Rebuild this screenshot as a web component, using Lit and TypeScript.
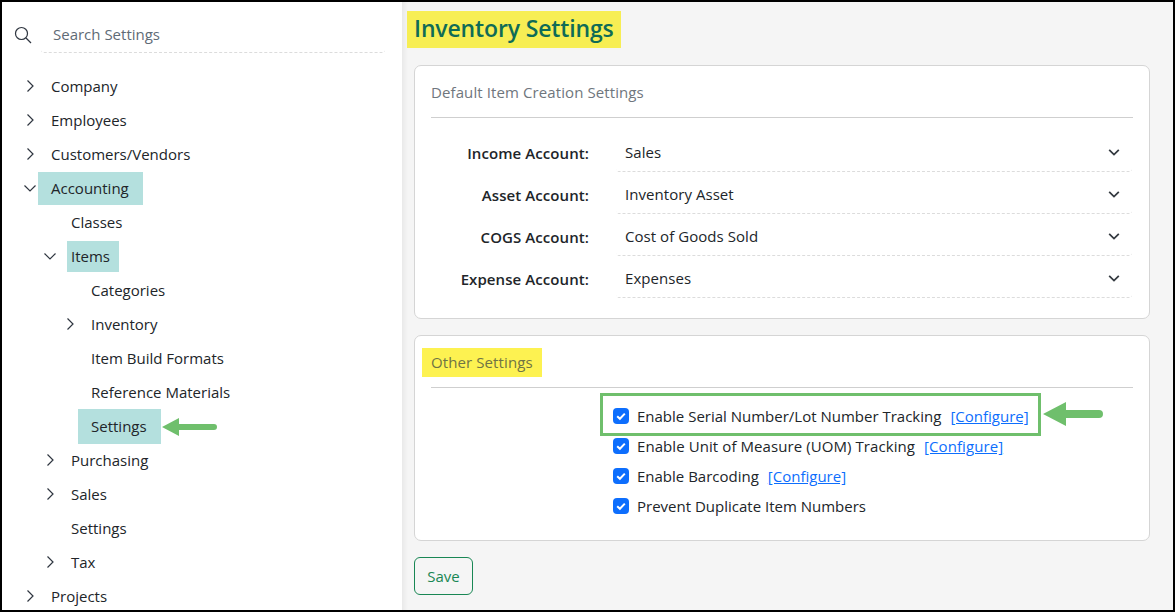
import { LitElement, html, css, svg } from "lit";
import { customElement } from "lit/decorators.js";

type Node = { label: string; level: number; arrow?: "r" | "d"; hl?: string };

const TREE: Node[] = [
  { label: "Company", level: 0, arrow: "r" },
  { label: "Employees", level: 0, arrow: "r" },
  { label: "Customers/Vendors", level: 0, arrow: "r" },
  { label: "Accounting", level: 0, arrow: "d", hl: "hl-a" },
  { label: "Classes", level: 1 },
  { label: "Items", level: 1, arrow: "d", hl: "hl-b" },
  { label: "Categories", level: 2 },
  { label: "Inventory", level: 2, arrow: "r" },
  { label: "Item Build Formats", level: 2 },
  { label: "Reference Materials", level: 2 },
  { label: "Settings", level: 2, hl: "hl-c" },
  { label: "Purchasing", level: 1, arrow: "r" },
  { label: "Sales", level: 1, arrow: "r" },
  { label: "Settings", level: 1 },
  { label: "Tax", level: 1, arrow: "r" },
  { label: "Projects", level: 0, arrow: "r" },
];

const ACCOUNTS = [
  ["Income Account:", "Sales"],
  ["Asset Account:", "Inventory Asset"],
  ["COGS Account:", "Cost of Goods Sold"],
  ["Expense Account:", "Expenses"],
];

const CHECKS: [string, boolean][] = [
  ["Enable Serial Number/Lot Number Tracking", true],
  ["Enable Unit of Measure (UOM) Tracking", true],
  ["Enable Barcoding", true],
  ["Prevent Duplicate Item Numbers", false],
];

const chevronRight = svg`<path d="M5.5 2.5 L11 8 L5.5 13.5" fill="none" stroke="#2f3640" stroke-width="1.2"/>`;
const chevronDown = svg`<path d="M2.5 5.5 L8 11 L13.5 5.5" fill="none" stroke="#2f3640" stroke-width="1.2"/>`;

@customElement("app-root")
export class AppRoot extends LitElement {
  static styles = css`
    :host {
      display: block;
      width: 1175px;
      height: 612px;
      box-sizing: border-box;
      border: 2px solid #000;
      font-family: "Open Sans", "Noto Sans", sans-serif;
      font-size: 15px;
      color: #212529;
      overflow: hidden;
      position: relative;
      background: #fff;
    }
    .layout { display: grid; grid-template-columns: 400px 1fr; height: 100%; }
    .side { background: #fff; overflow: hidden; min-width: 0; }
    .search { display: flex; align-items: flex-start; padding: 10px 0 0 12px; height: 58px; box-sizing: border-box; }
    .search svg { width: 18px; height: 18px; margin-top: 14px; flex: none; }
    .search-box {
      margin-left: 9px; width: 344px; height: 41px; box-sizing: border-box;
      padding: 12px 0 0 12px; border-bottom: 1px dashed #dcdcdc; border-radius: 0 0 3px 3px;
      color: #5f6b76;
    }
    .tree { display: flex; flex-direction: column; margin-top: 9px; }
    .row { height: 34px; display: flex; align-items: center; position: relative; flex: none; }
    .l0 { padding-left: 49px; }
    .l1 { padding-left: 69px; }
    .l2 { padding-left: 89px; }
    .chev { position: absolute; top: 9px; width: 16px; height: 16px; }
    .l0 .chev { left: 20px; }
    .l1 .chev { left: 40px; }
    .l2 .chev { left: 60px; }
    .label { white-space: nowrap; }
    .hl-a, .hl-b, .hl-c { background: #b4e0de; display: flex; align-items: center; }
    .hl-a { margin-left: -13px; padding: 0 14px 0 13px; height: 33px; }
    .hl-b { margin-left: -4px; padding: 0 9px 0 4px; height: 31px; }
    .hl-c { margin-left: -13px; padding: 0 14px 0 13px; height: 35px; }
    .side-arrow { position: absolute; left: 159px; top: 416px; line-height: 0; }
    .main {
      background: linear-gradient(to right, #e9e9e9, #f5f5f5 6px);
      padding: 9px 23px 0 5px;
      min-width: 0; overflow: hidden;
    }
    h1 {
      display: inline-block; margin: 0; padding: 0 7px; height: 37px; line-height: 34px;
      background: #f7ee54; color: #0f6b57; font-size: 23px; font-weight: 600; letter-spacing: -0.14px;
      vertical-align: top;
    }
    .card {
      margin-left: 7px; background: #fff; border: 1px solid #d5d5d5; border-radius: 7px;
      box-sizing: border-box; padding: 0 16px;
    }
    .card.one { margin-top: 17px; height: 254px; }
    .card.two { margin-top: 16px; height: 206px; position: relative; }
    .head { height: 52px; border-bottom: 1px solid #cfcfcf; display: flex; align-items: center; color: #6f767d; letter-spacing: 0.1px; box-sizing: border-box; }
    .two .head { padding: 0 0 1px; }
    .other { background: #fdf251; margin-left: -9px; padding: 0 9px; height: 29px; display: flex; align-items: center; margin-top: 2px; color: #6f7445; }
    .form { display: flex; flex-direction: column; padding-top: 12px; }
    .frow { height: 42px; display: grid; grid-template-columns: 158px 516px; column-gap: 27px; flex: none; }
    .flabel { text-align: right; font-weight: 600; align-self: center; padding-top: 4px; letter-spacing: 0.08px; white-space: nowrap; }
    .select {
      border-bottom: 1px dashed #dcdcdc; border-radius: 0 0 3px 3px; display: flex; align-items: center;
      justify-content: space-between; padding: 2px 11px 0 9px; box-sizing: border-box; letter-spacing: 0.05px;
    }
    .select svg { width: 14px; height: 14px; }
    .checks { display: flex; flex-direction: column; padding: 13px 0 0 182px; }
    .check { height: 30px; display: flex; align-items: center; flex: none; white-space: nowrap; }
    .check:nth-child(2) { letter-spacing: 0.08px; }
    .box { width: 16px; height: 16px; border-radius: 4px; background: #0d6efd; margin-right: 8px; flex: none; display: flex; align-items: center; justify-content: center; }
    .box svg { width: 12px; height: 12px; }
    a { color: #0d6efd; text-decoration: underline; margin-left: 9px; }
    .callout { position: absolute; left: 185px; top: 57px; width: 441px; height: 43px; border: 3px solid #6fbf6c; box-sizing: border-box; pointer-events: none; }
    .main-arrow { position: absolute; left: 1040px; top: 400px; line-height: 0; }
    .save {
      display: block; margin: 16px 0 0 7px; width: 59px; height: 38px; box-sizing: border-box;
      border: 1px solid #198754; border-radius: 6px; background: transparent; color: #198754;
      font: inherit; padding: 0;
    }
  `;

  /** Left-pointing annotation arrow with a rounded tail. */
  private arrow(w: number, h: number, head: number, shaft: number) {
    const mid = h / 2;
    const r = shaft / 2;
    const d = `M1 ${mid} L${head + 1} 0 V${mid - r} H${w - r} a${r} ${r} 0 0 1 0 ${shaft} H${head + 1} V${h} Z`;
    return html`<svg width=${w} height=${h} viewBox="0 0 ${w} ${h}"><path d=${d} fill="#6fbf6c" /></svg>`;
  }

  render() {
    return html`
      <div class="layout">
        <aside class="side">
          <div class="search">
            <svg viewBox="0 0 18 18"><circle cx="7.5" cy="7.5" r="6" fill="none" stroke="#2f3640" stroke-width="1.2"/><path d="M12 12 L17 17" stroke="#2f3640" stroke-width="1.3"/></svg>
            <div class="search-box">Search Settings</div>
          </div>
          <div class="tree">
            ${TREE.map(
              (n) => html`<div class="row l${n.level}">
                ${n.arrow ? html`<svg class="chev" viewBox="0 0 16 16">${n.arrow === "r" ? chevronRight : chevronDown}</svg>` : ""}
                <span class="label ${n.hl ?? ""}">${n.label}</span>
              </div>`
            )}
          </div>
        </aside>
        <main class="main">
          <h1>Inventory Settings</h1>
          <section class="card one">
            <div class="head">Default Item Creation Settings</div>
            <div class="form">
              ${ACCOUNTS.map(
                ([l, v]) => html`<div class="frow">
                  <div class="flabel">${l}</div>
                  <div class="select"><span>${v}</span>
                    <svg viewBox="0 0 16 16"><path d="M2.5 5.5 L8 11 L13.5 5.5" fill="none" stroke="#343a40" stroke-width="2"/></svg>
                  </div>
                </div>`
              )}
            </div>
          </section>
          <section class="card two">
            <div class="head"><span class="other">Other Settings</span></div>
            <div class="checks">
              ${CHECKS.map(
                ([l, c]) => html`<div class="check">
                  <span class="box"><svg viewBox="0 0 12 12"><path d="M2.2 6.2 L4.9 8.8 L9.8 3.6" fill="none" stroke="#fff" stroke-width="2"/></svg></span>
                  ${l}${c ? html`<a href="#">[Configure]</a>` : ""}
                </div>`
              )}
            </div>
            <div class="callout"></div>
          </section>
          <button class="save">Save</button>
        </main>
      </div>
      <div class="side-arrow">${this.arrow(56, 18, 17, 6)}</div>
      <div class="main-arrow">${this.arrow(61, 24, 23, 8)}</div>
    `;
  }
}
